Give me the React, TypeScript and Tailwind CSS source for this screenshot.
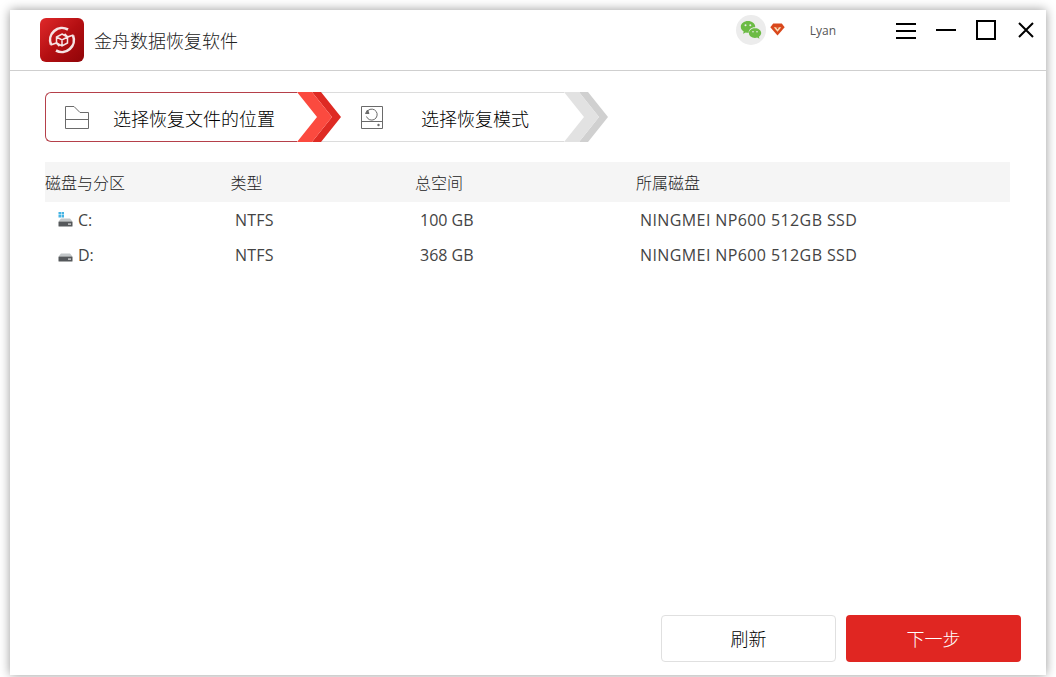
const font = "font-['Open_Sans','Noto_Sans_CJK_SC',sans-serif]";

const columns = ["磁盘与分区", "类型", "总空间", "所属磁盘"];

const drives = [
  { name: "C:", fs: "NTFS", size: "100 GB", disk: "NINGMEI NP600 512GB SSD", system: true },
  { name: "D:", fs: "NTFS", size: "368 GB", disk: "NINGMEI NP600 512GB SSD", system: false },
];

function Logo() {
  return (
    <div className="w-11 h-11 rounded-md bg-gradient-to-br from-[#e0282a] via-[#b50f12] to-[#8f0508] flex items-center justify-center">
      <svg width="30" height="30" viewBox="0 0 30 30" fill="none" stroke="#f6e4e4" strokeWidth="2.6">
        <path d="M4 19.500A12 12 0 0 1 21 4.500" />
        <path d="M26 10.500A12 12 0 0 1 9 25.500" />
        <path d="M3.500 20l6-2 3 3M26.500 10l-6 2-3-3" strokeWidth="1.800" />
        <path d="M15 9l5.500 3v6l-5.500 3-5.500-3v-6zM9.500 12l5.500 3 5.500-3M15 15v6" strokeWidth="1.500" />
      </svg>
    </div>
  );
}

function WeChat() {
  return (
    <div className="w-[30px] h-[30px] rounded-full bg-[#ececec] flex items-center justify-center">
      <svg width="22" height="20" viewBox="0 0 22 20">
        <path d="M8 1c4 0 7.200 2.500 7.200 5.700 0 .2 0 .4-.1.6-3.600-.2-6.600 2.300-6.300 5.400H8c-.8 0-1.500-.1-2.200-.3L3 13.800l.7-2.300C1.900 10.400.8 8.700.8 6.700.8 3.500 4 1 8 1z" fill="#6cbb45" />
        <path d="M15 8.200c3.400 0 6.200 2.100 6.200 4.800 0 1.500-.9 2.900-2.300 3.800l.6 2-2.400-1.200c-.7.200-1.400.3-2.100.3-3.400 0-6.100-2.200-6.100-4.900s2.700-4.800 6.100-4.800z" fill="#6cbb45" />
        <circle cx="5.500" cy="5.200" r="1" fill="#ececec" />
        <circle cx="10.300" cy="5.200" r="1" fill="#ececec" />
        <circle cx="13" cy="11.800" r=".8" fill="#ececec" />
        <circle cx="17" cy="11.800" r=".8" fill="#ececec" />
      </svg>
    </div>
  );
}

function Gem() {
  return (
    <svg width="15" height="13" viewBox="0 0 14 12">
      <path d="M3 .5h8l2.700 3.500L7 11.700.3 4z" fill="#d9481c" />
      <path d="M3.500 3.800h7L7 8.200z" fill="#f9dfb8" />
      <path d="M5.500 3.800h3L7 6z" fill="#d9481c" />
    </svg>
  );
}

function FolderIcon() {
  return (
    <svg width="26" height="25" viewBox="0 0 26 25" fill="none" stroke="#6a6a6a" strokeWidth="1">
      <path d="M1.500 1.500h8.500l6 6h8.500v16h-23z" />
      <path d="M1.500 14.500h23" />
    </svg>
  );
}

function DiskIcon() {
  return (
    <svg width="24" height="25" viewBox="0 0 24 25" fill="none" stroke="#6a6a6a" strokeWidth="1">
      <path d="M1.500 1.500h21v22h-21zM1.500 16.500h21" />
      <path d="M8 5.500a5.500 5.500 0 1 1-1.500 6" />
      <path d="M5.500 8.500l2-3.500 1.500 3.500z" fill="#6a6a6a" />
      <circle cx="18.500" cy="20" r="1.200" fill="#6a6a6a" stroke="none" />
    </svg>
  );
}

function Chevron({ dark, light }: { dark: string; light: string }) {
  return (
    <svg width="44" height="50" viewBox="0 0 44 50" className="relative z-10 shrink-0">
      <path d="M15 0h9l20 25-20 25h-9l20-25z" fill={dark} />
      <path d="M0 0h15l20 25-20 25H0l20-25z" fill={light} />
    </svg>
  );
}

function DriveIcon({ system }: { system: boolean }) {
  return (
    <div className="w-[15px] h-[15px] flex items-end">
      <svg width="15" height="15" viewBox="0 0 15 15">
        {system && (
          <g fill="#45b4e4">
            <rect x="0.500" y="0" width="2.500" height="2.500" />
            <rect x="3.500" y="0" width="2.500" height="2.500" />
            <rect x="0.500" y="3" width="2.500" height="2.500" />
            <rect x="3.500" y="3" width="2.500" height="2.500" />
          </g>
        )}
        <path d="M3 6.500h9l2.500 3H.5z" fill="#c2c6c8" />
        <rect x="0.500" y="9.500" width="14" height="5" rx="0.500" fill="#55585b" />
        <rect x="10" y="11.500" width="3" height="1.200" fill="#e6e6e6" />
      </svg>
    </div>
  );
}

export default function App() {
  return (
    <div className={`${font} w-[1056px] h-[677px] bg-white overflow-hidden pt-[10px] pl-[10px]`}>
      <div className="w-[1036px] h-[665px] bg-white shadow-[0_0_10px_rgba(0,0,0,0.4)] flex flex-col">
        {/* title bar */}
        <div className="h-[61px] shrink-0 border-b border-[#cfcfcf] flex pl-[30px] pt-2">
          <Logo />
          <div className="ml-[10px] mt-[11px] text-[18px] leading-6 font-light text-[#222]">金舟数据恢复软件</div>
          <div className="ml-auto flex items-start">
            <div className="mt-[-3px]"><WeChat /></div>
            <div className="ml-1 mt-[5px]"><Gem /></div>
            <div className="w-[25px]" />
            <div className="mt-[5px] text-xs leading-4 text-[#555]">Lyan</div>
            <div className="ml-[60px] mt-[5px] w-5 flex flex-col gap-[5px]">
              <div className="h-[2px] bg-black" />
              <div className="h-[2px] bg-black" />
              <div className="h-[2px] bg-black" />
            </div>
            <div className="ml-5 mt-[11px] w-5 h-[2px] bg-black" />
            <div className="ml-5 mt-[2px] w-5 h-5 border-2 border-black" />
            <svg width="16" height="16" viewBox="0 0 16 16" className="ml-[22px] mt-[4px] mr-3" stroke="#000" strokeWidth="2">
              <path d="M1 1l14 14M15 1L1 15" />
            </svg>
          </div>
        </div>

        {/* steps */}
        <div className="mt-[21px] ml-[35px] flex h-[50px] text-[18px] font-light text-black">
          <div className="w-[252px] border border-r-0 border-[#b5404a] rounded-l-md flex items-center pl-[18px]">
            <FolderIcon />
            <span className="ml-[23px] mt-[4px]">选择恢复文件的位置</span>
          </div>
          <Chevron dark="#de2a23" light="#fb4a3f" />
          <div className="w-[244px] ml-[-21px] border-y border-[#dcdcdc] flex items-center pl-[40px]">
            <DiskIcon />
            <span className="ml-[37px] mt-[4px]">选择恢复模式</span>
          </div>
          <Chevron dark="#d0d0d0" light="#e2e2e2" />
        </div>

        {/* drive table */}
        <div className="mt-[20px] ml-[35px] w-[965px]">
          <div className="h-10 bg-[#f5f5f5] grid grid-cols-[185.5px_184.5px_221px_1fr] items-center text-base font-light text-[#222]">
            {columns.map((c) => (
              <div key={c} className="pt-[2px]">{c}</div>
            ))}
          </div>
          {drives.map((d) => (
            <div key={d.name} className="h-[35px] grid grid-cols-[185.5px_184.5px_221px_1fr] items-center text-base text-[#444]">
              <div className="flex items-center pl-[13px] gap-[5px]">
                <DriveIcon system={d.system} />
                <span>{d.name}</span>
              </div>
              <div className="pl-[4.5px] tracking-[0.2px]">{d.fs}</div>
              <div className="pl-[5px]">{d.size}</div>
              <div className="pl-1 tracking-[0.4px]">{d.disk}</div>
            </div>
          ))}
        </div>

        {/* actions */}
        <div className="mt-auto mb-[13px] mr-[25px] flex justify-end gap-[10px] text-[18px] font-light">
          <button className="w-[175px] h-[47px] pt-[2px] rounded border border-[#e0e0e0] bg-white text-black">刷新</button>
          <button className="w-[175px] h-[47px] pt-[2px] rounded bg-[#e02622] text-white">下一步</button>
        </div>
      </div>
    </div>
  );
}
